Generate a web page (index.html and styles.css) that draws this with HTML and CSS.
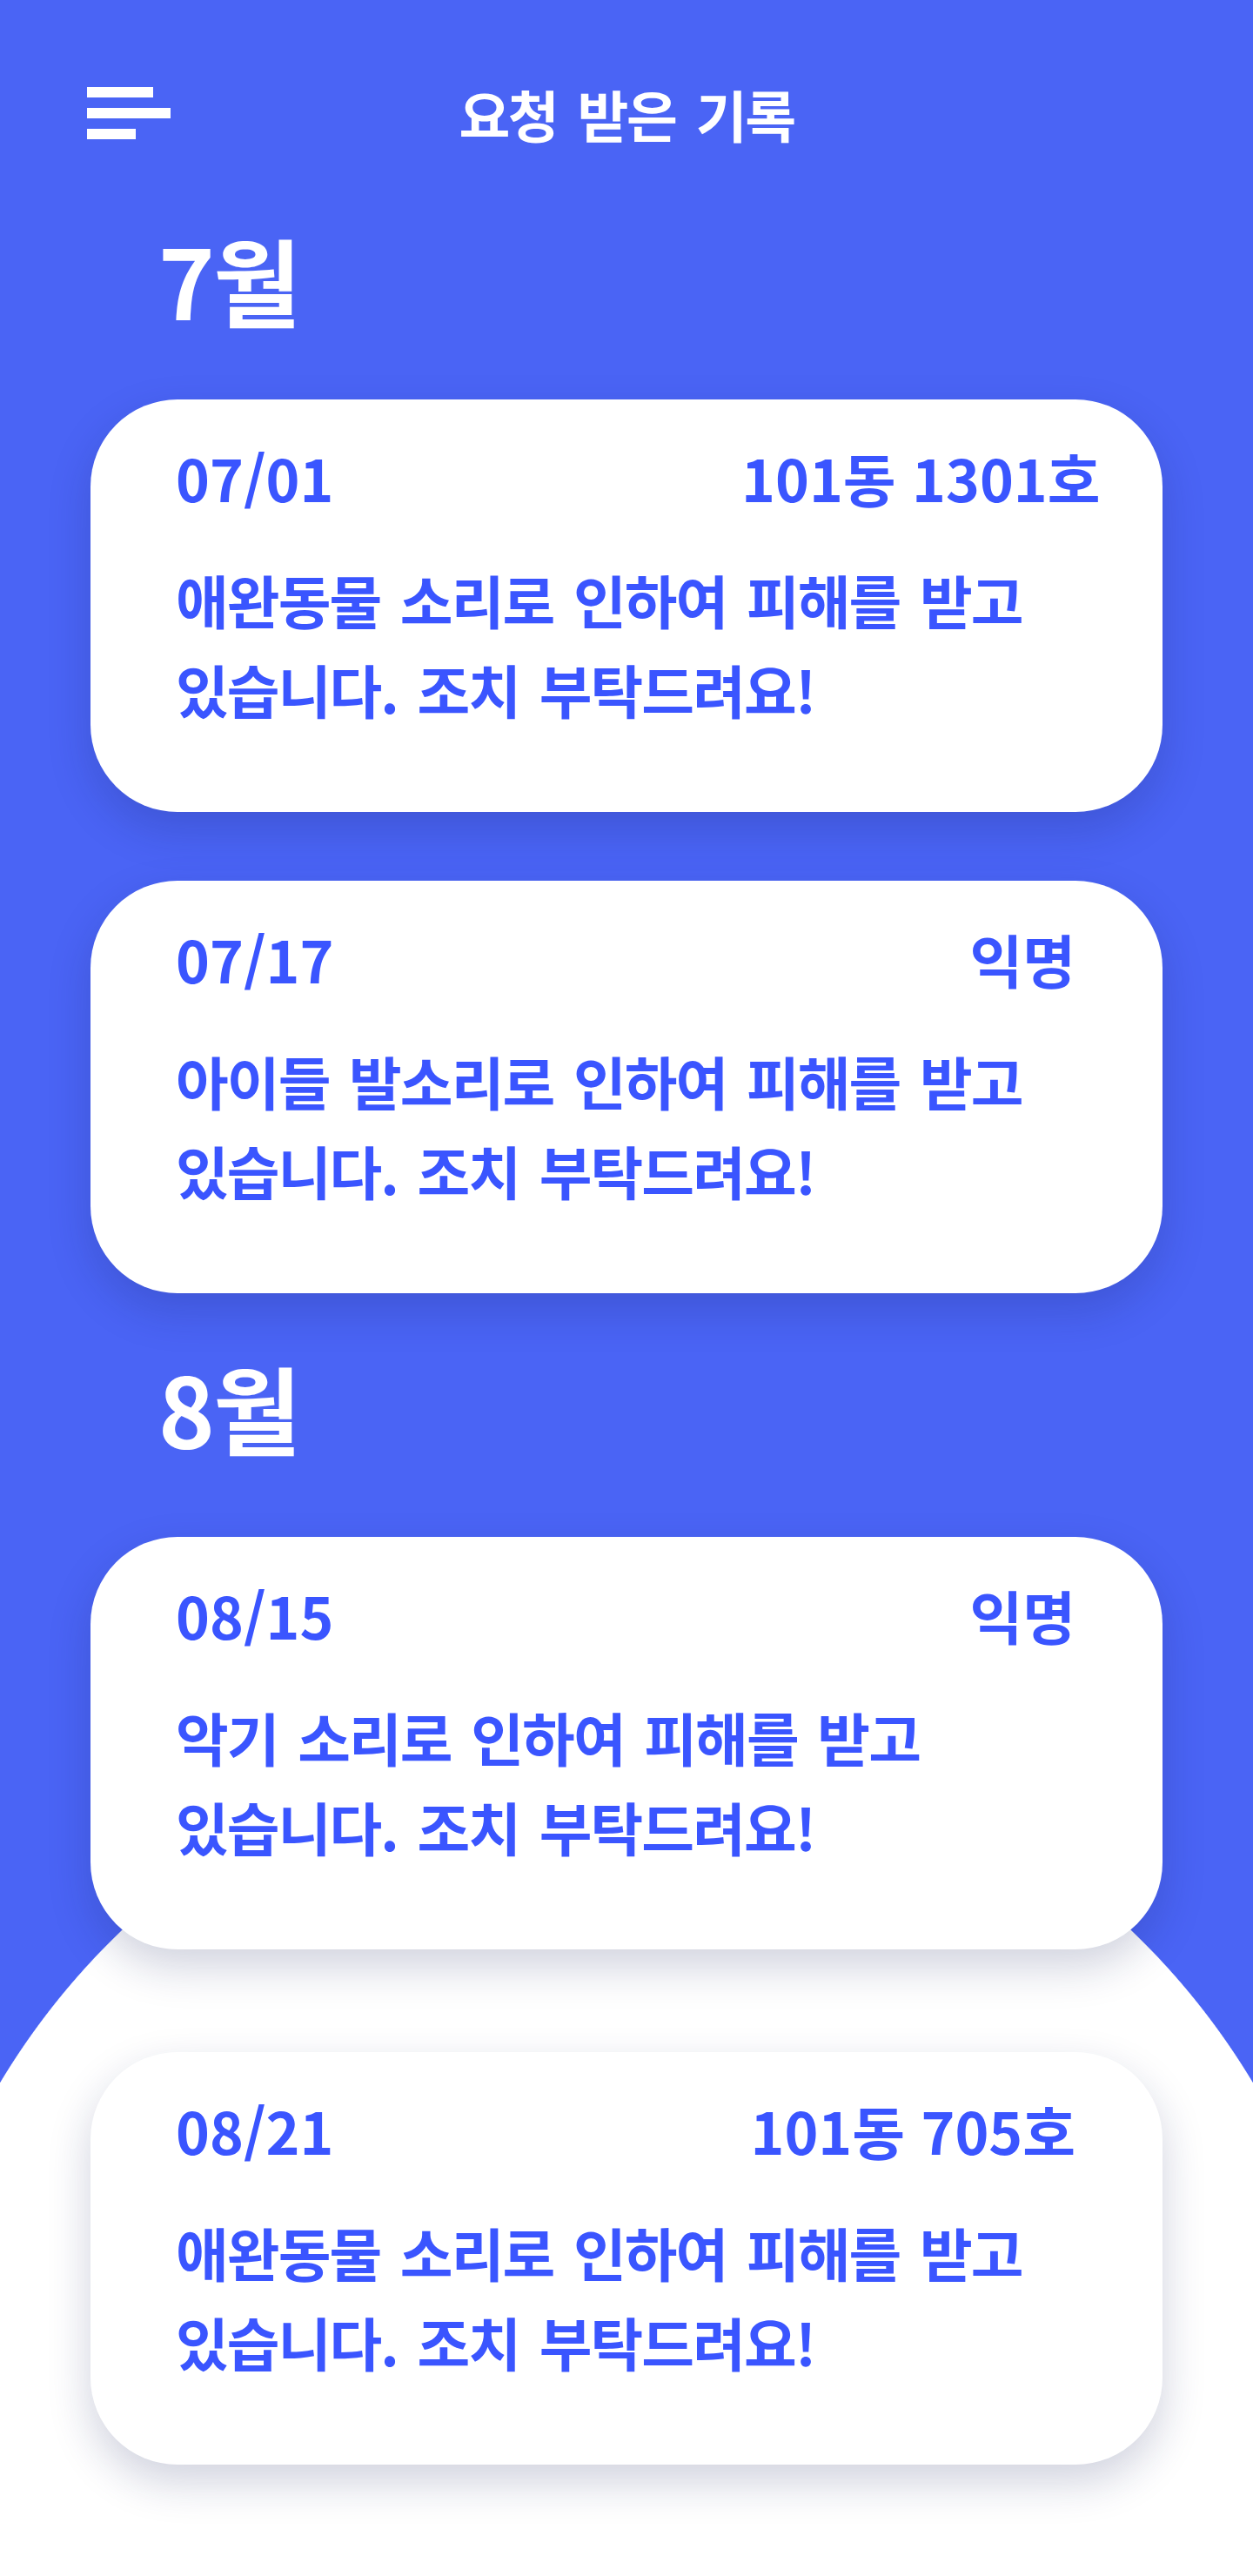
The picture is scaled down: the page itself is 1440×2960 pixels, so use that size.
FILE: index.html
```html
<!DOCTYPE html>
<html lang="ko">
<head>
<meta charset="utf-8">
<title>요청 받은 기록</title>
<link rel="stylesheet" href="styles.css">
</head>
<body>
<div class="page">
  <header class="topbar">
    <div class="menu" aria-label="메뉴">
      <span class="menu-bar menu-bar--mid"></span>
      <span class="menu-bar menu-bar--long"></span>
      <span class="menu-bar menu-bar--short"></span>
    </div>
    <h1 class="title">요청 받은 기록</h1>
    <div class="spacer"></div>
  </header>

  <h2 class="month">7월</h2>
  <section class="cards">
    <article class="card">
      <div class="card-head">
        <span class="date">07/01</span>
        <span class="who">101동 1301호</span>
      </div>
      <p class="card-body">애완동물 소리로 인하여 피해를 받고<br>있습니다. 조치 부탁드려요!</p>
    </article>
    <article class="card">
      <div class="card-head">
        <span class="date">07/17</span>
        <span class="who">익명</span>
      </div>
      <p class="card-body">아이들 발소리로 인하여 피해를 받고<br>있습니다. 조치 부탁드려요!</p>
    </article>
  </section>

  <h2 class="month month--aug">8월</h2>
  <section class="cards">
    <article class="card">
      <div class="card-head">
        <span class="date">08/15</span>
        <span class="who">익명</span>
      </div>
      <p class="card-body">악기 소리로 인하여 피해를 받고<br>있습니다. 조치 부탁드려요!</p>
    </article>
    <article class="card card--far">
      <div class="card-head">
        <span class="date">08/21</span>
        <span class="who">101동 705호</span>
      </div>
      <p class="card-body">애완동물 소리로 인하여 피해를 받고<br>있습니다. 조치 부탁드려요!</p>
    </article>
  </section>
</div>
</body>
</html>
```

FILE: styles.css
```css
* {
  box-sizing: border-box;
}

html,
body {
  margin: 0;
  padding: 0;
}

body {
  font-family: "Noto Sans CJK KR", "Noto Sans", sans-serif;
  background: #ffffff;
}

.page {
  width: 1440px;
  height: 2960px;
  overflow: hidden;
  padding-top: 70px;
  background: radial-gradient(circle 840px at 720px 2825px, #ffffff 839px, #4a64f5 840px);
}

.topbar {
  height: 120px;
  display: grid;
  grid-template-columns: 1fr auto 1fr;
  align-items: center;
}

.menu {
  padding-left: 100px;
  display: flex;
  flex-direction: column;
  gap: 12px;
}

.menu-bar {
  display: block;
  height: 12px;
  background: #ffffff;
}

.menu-bar--mid {
  width: 76px;
}

.menu-bar--long {
  width: 96px;
}

.menu-bar--short {
  width: 56px;
}

.title {
  margin: 0;
  color: #ffffff;
  font-size: 64px;
  font-weight: 700;
  letter-spacing: -2.5px;
  word-spacing: 8px;
  line-height: 76px;
  white-space: nowrap;
}

.month {
  margin: 66px 0 74px 0;
  padding-left: 182px;
  color: #ffffff;
  font-size: 110px;
  font-weight: 700;
  line-height: 129px;
  letter-spacing: -2px;
}

.month--aug {
  margin-bottom: 85px;
}

.cards {
  display: flex;
  flex-direction: column;
  gap: 79px;
  padding: 0 104px;
}

.card {
  height: 474px;
  background: #ffffff;
  border-radius: 100px;
  padding: 50px 100px 0 98px;
  box-shadow: 0 20px 50px rgba(20, 30, 90, 0.2);
  color: #3a55ff;
}

.card--far {
  margin-top: 39px;
}

.card-head {
  display: flex;
  justify-content: space-between;
  font-size: 66px;
  font-weight: 700;
  line-height: 79px;
}

.date {
  white-space: nowrap;
}

.who {
  width: 384px;
  text-align: right;
  white-space: nowrap;
}

.card-body {
  margin: 49px 0 0 0;
  font-size: 66px;
  font-weight: 700;
  line-height: 103px;
  letter-spacing: -1.9px;
  word-spacing: 6px;
  white-space: nowrap;
}
```
